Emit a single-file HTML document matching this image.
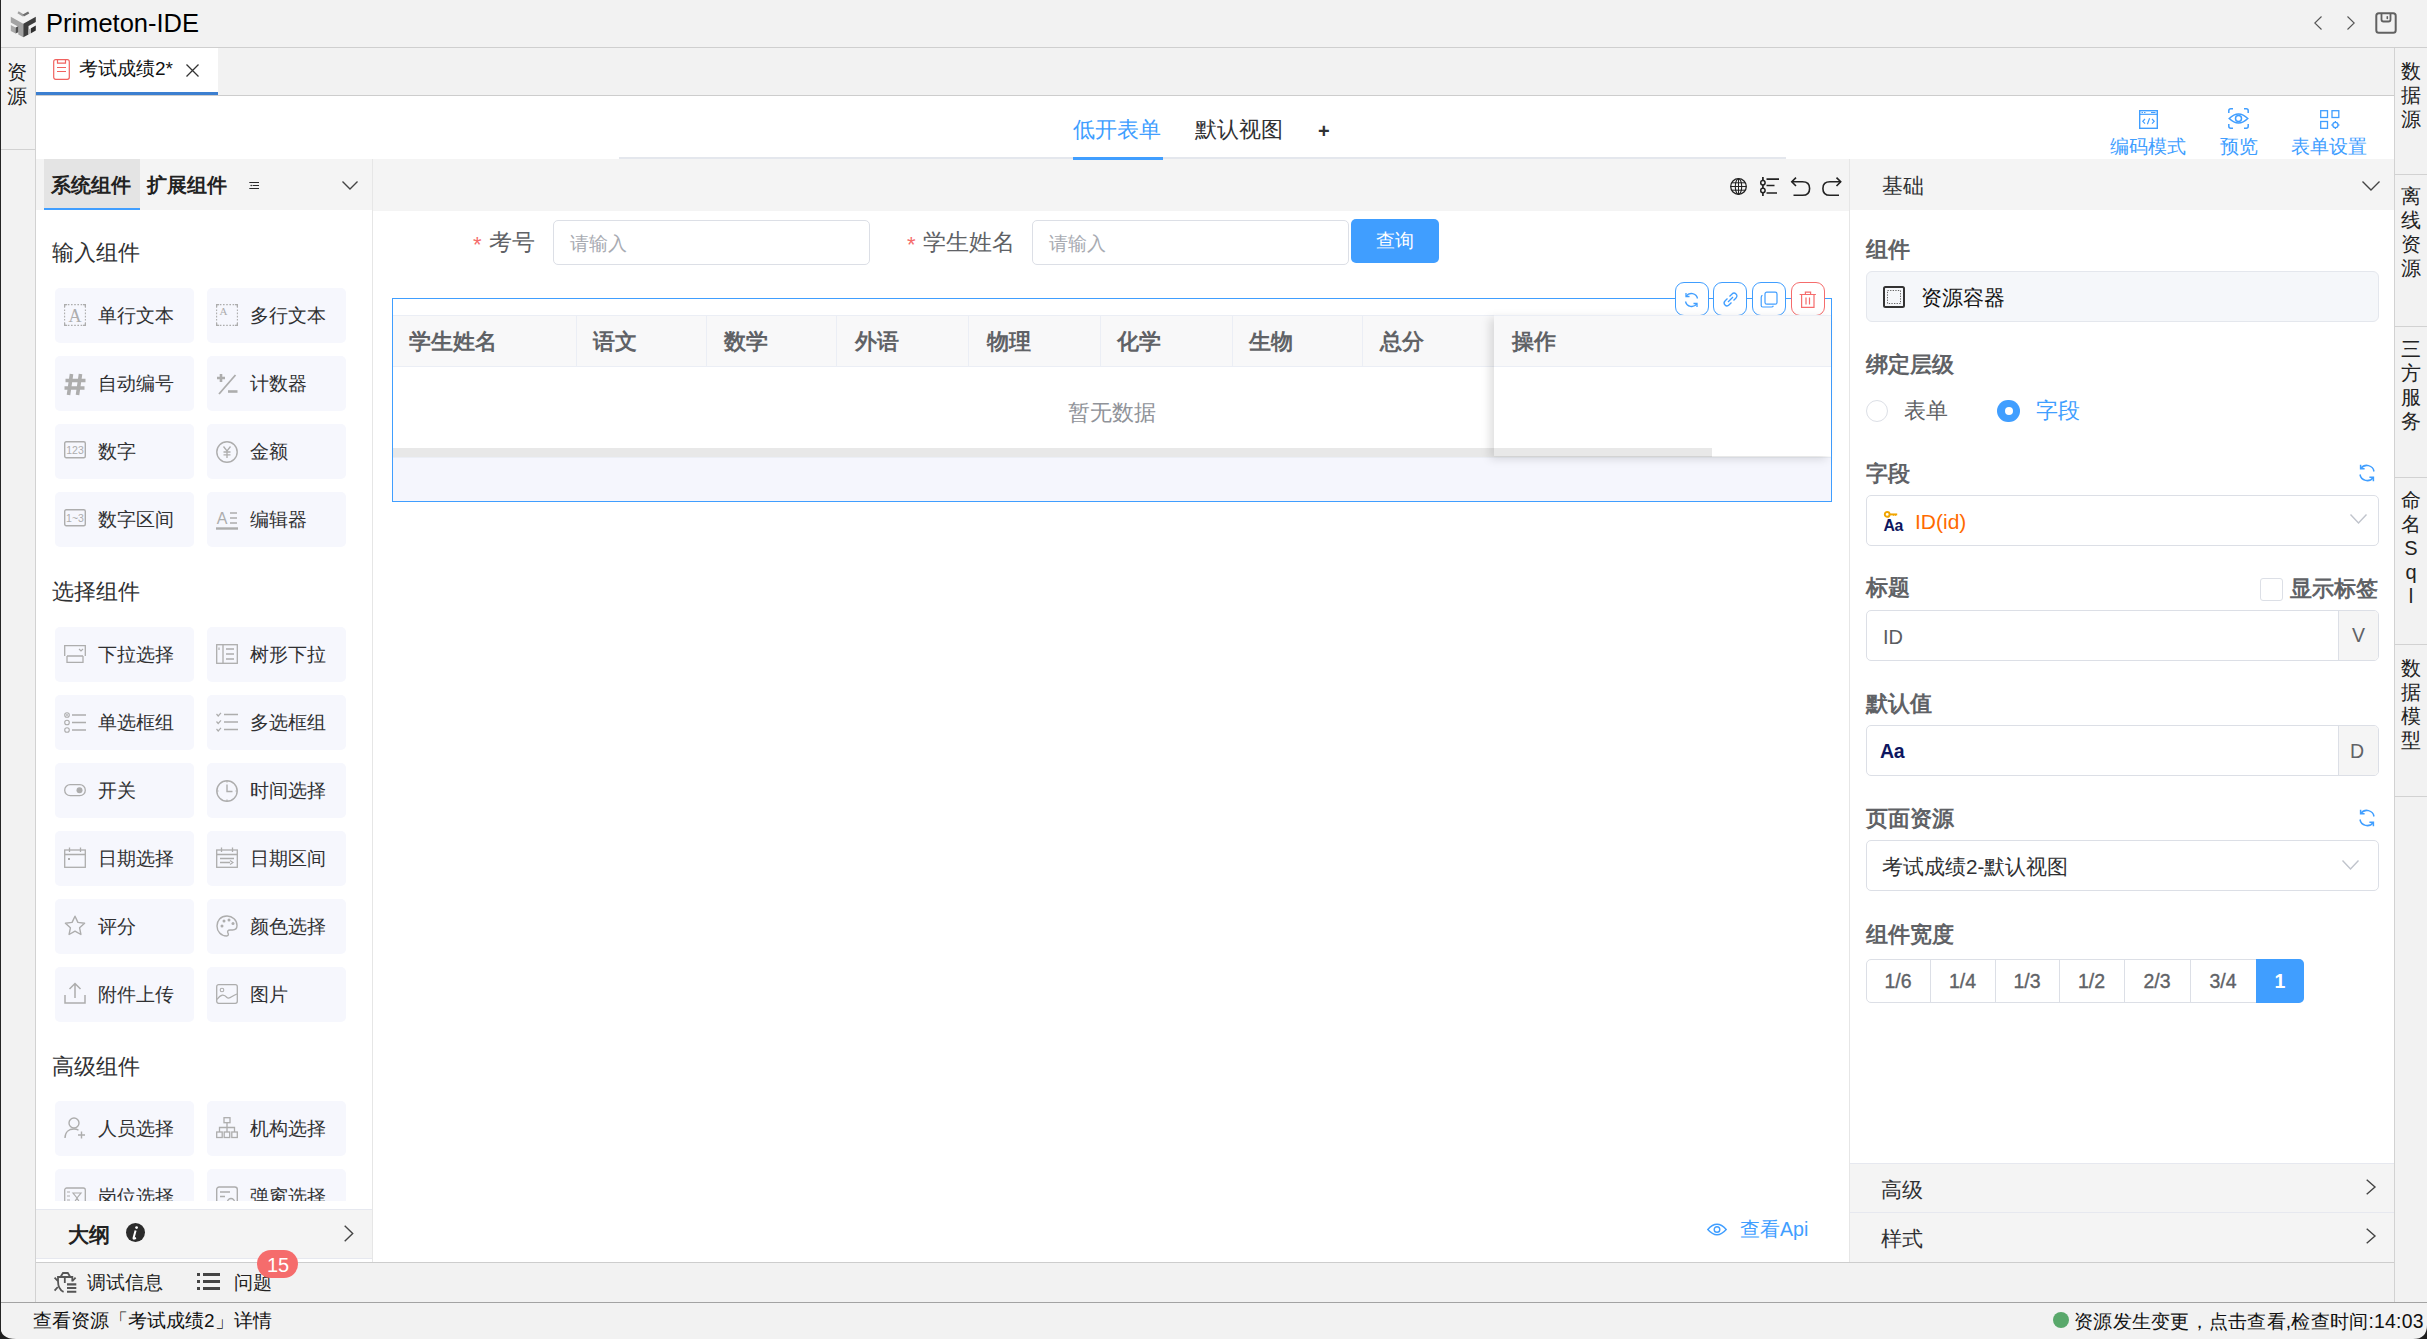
<!DOCTYPE html>
<html><head><meta charset="utf-8">
<style>
*{box-sizing:border-box;margin:0;padding:0}
html,body{width:2427px;height:1339px;overflow:hidden;background:#fff;font-family:"Liberation Sans",sans-serif;color:#303133}
.a{position:absolute}
.t{position:absolute;white-space:nowrap;line-height:1}
svg{position:absolute;overflow:visible}
/* frame */
#titlebar{left:0;top:0;width:2427px;height:48px;background:#f2f2f2;border-bottom:1px solid #cfcfcf}
#lside{left:0;top:48px;width:36px;height:1254px;background:#f2f2f2;border-right:1px solid #d2d2d2}
#rside{left:2394px;top:48px;width:33px;height:1254px;background:#f2f2f2;border-left:1px solid #d2d2d2}
.vtxt{position:absolute;font-size:20px;line-height:24px;width:33px;text-align:center;color:#222;white-space:normal;word-break:break-all}
.sep{position:absolute;height:1px;background:#d2d2d2}
#tabbar{left:36px;top:48px;width:2358px;height:48px;background:#f2f2f2;border-bottom:1px solid #cdcdcd}
#tab1{left:36px;top:48px;width:182px;height:47px;background:#fff;border-bottom:3px solid #3c7fd0}
#dtool{left:36px;top:96px;width:2358px;height:63px;background:#fff}
/* panels */
#lpanel{left:36px;top:159px;width:337px;height:1103px;background:#fff;border-right:1px solid #e6e6e6;overflow:hidden}
#lphead{left:0;top:0;width:336px;height:51px;background:#f4f4f4}
#canvas{left:373px;top:159px;width:1476px;height:1103px;background:#fff}
#ctool{left:0;top:0;width:1476px;height:52px;background:#f4f4f4}
#rpanel{left:1849px;top:159px;width:545px;height:1103px;background:#fff;border-left:1px solid #e6e6e6}
#rphead{left:0;top:0;width:544px;height:51px;background:#f4f4f4}
#bottombar{left:36px;top:1262px;width:2358px;height:40px;background:#f2f2f2;border-top:1px solid #cdcdcd}
#status{left:0;top:1302px;width:2427px;height:37px;background:#f2f2f2;border-top:1px solid #a3a3a3}
.card{position:absolute;width:139px;height:55px;background:#f6f7fd;border-radius:5px}
.card .ct{position:absolute;left:43px;top:18px;font-size:19px;line-height:19px;color:#303133;white-space:nowrap}
.card svg{left:8px;top:16px}
.grp{position:absolute;left:16px;font-size:22px;line-height:22px;color:#303133;white-space:nowrap}
.plabel{position:absolute;left:17px;font-size:22px;line-height:22px;font-weight:bold;color:#606266;white-space:nowrap}
.inp{position:absolute;background:#fff;border:1px solid #dcdfe6;border-radius:5px}
</style></head><body>
<div id="titlebar" class="a"></div>
<div class="a" style="left:0;top:0;width:1px;height:1339px;background:#252525;z-index:50"></div>
<div class="t" style="left:46px;top:11px;font-size:25.5px;color:#000">Primeton-IDE</div>

<div id="lside" class="a"></div>
<div id="rside" class="a"></div>
<div id="tabbar" class="a"></div>
<div id="tab1" class="a"></div>
<div id="dtool" class="a"></div>

<!-- designer toolbar -->
<div class="t" style="left:1073px;top:119px;font-size:22px;color:#409eff">低开表单</div>
<div class="a" style="left:1073px;top:157px;width:90px;height:3px;background:#409eff;z-index:2"></div>
<div class="a" style="left:619px;top:157px;width:1167px;height:2px;background:#e4e7ed"></div>
<div class="t" style="left:1195px;top:119px;font-size:22px;color:#303133">默认视图</div>
<div class="t" style="left:1318px;top:121px;font-size:20px;color:#303133;font-weight:bold">+</div>
<svg style="left:2139px;top:110px" width="19" height="19" viewBox="0 0 19 19"><rect x="0.7" y="0.7" width="17.6" height="17.6" fill="none" stroke="#409eff" stroke-width="1.4"/><path d="M0.7 4.3 H18.3" stroke="#409eff" stroke-width="1.2"/><path d="M2.5 2.5 H4 M5 2.5 H6.5 M12 2.5 H16.5" stroke="#409eff" stroke-width="1"/><path d="M6 9 L3.8 11.3 L6 13.6 M13 9 L15.2 11.3 L13 13.6 M10.6 8.3 L8.4 14.3" fill="none" stroke="#409eff" stroke-width="1.2"/></svg>
<div class="t" style="left:2110px;top:138px;font-size:18.7px;color:#409eff">编码模式</div>
<svg style="left:2228px;top:108px" width="21" height="21" viewBox="0 0 21 21"><path d="M0.8 5 V2.8 Q0.8 0.8 2.8 0.8 H5 M16 0.8 H18.2 Q20.2 0.8 20.2 2.8 V5 M20.2 16 V18.2 Q20.2 20.2 18.2 20.2 H16 M5 20.2 H2.8 Q0.8 20.2 0.8 18.2 V16" fill="none" stroke="#409eff" stroke-width="1.5"/><path d="M1.2 10.5 Q10.5 1.5 19.8 10.5 Q10.5 19.5 1.2 10.5 Z" fill="none" stroke="#409eff" stroke-width="1.5"/><circle cx="10.5" cy="10.5" r="3" fill="none" stroke="#409eff" stroke-width="1.5"/></svg>
<div class="t" style="left:2220px;top:138px;font-size:18.7px;color:#409eff">预览</div>
<svg style="left:2320px;top:110px" width="20" height="20" viewBox="0 0 20 20"><rect x="0.7" y="0.7" width="6.8" height="6.8" fill="none" stroke="#409eff" stroke-width="1.3"/><rect x="12" y="0.7" width="6.8" height="6.8" fill="none" stroke="#409eff" stroke-width="1.3"/><rect x="0.7" y="11.5" width="6.8" height="6.8" fill="none" stroke="#409eff" stroke-width="1.3"/><circle cx="15.4" cy="15" r="2.6" fill="none" stroke="#409eff" stroke-width="1.3"/><path d="M15.4 11 V12.2 M15.4 17.8 V19 M11.4 15 H12.6 M18.2 15 H19.4" stroke="#409eff" stroke-width="1.3"/></svg>
<div class="t" style="left:2291px;top:138px;font-size:18.7px;color:#409eff">表单设置</div>
<div id="lpanel" class="a"><div id="lphead" class="a"></div></div>
<!-- LEFT START -->
<!-- left panel header -->
<div class="a" style="left:44px;top:159px;width:96px;height:52px;background:#e4e4e4"></div>
<div class="a" style="left:44px;top:208px;width:96px;height:3px;background:#409eff"></div>
<div class="t" style="left:51px;top:175px;font-size:20.2px;font-weight:bold;color:#222">系统组件</div>
<div class="t" style="left:147px;top:175px;font-size:20.2px;font-weight:bold;color:#222">扩展组件</div>
<svg style="left:249px;top:181px" width="11" height="9" viewBox="0 0 11 9"><path d="M0.3 1.5 H10 M3.6 4.5 H10 M0.3 7.5 H10" stroke="#2a2a2a" stroke-width="1.2"/><circle cx="2.2" cy="4.5" r="0.8" fill="#2a2a2a"/></svg>
<svg style="left:342px;top:181px" width="16" height="9" viewBox="0 0 16 9"><path d="M0.5 0.5 L8 8 L15.5 0.5" fill="none" stroke="#444" stroke-width="1.4"/></svg>
<div class="a" style="left:36px;top:210px;width:336px;height:991px;overflow:hidden;background:#fff">
<div class="grp" style="top:32px">输入组件</div>
<div class="card" style="left:19px;top:78px"><svg style="left:9px;top:16px" width="22" height="22" viewBox="0 0 22 22"><rect x="0.6" y="0.6" width="20.8" height="20.8" fill="none" stroke="#adadad" stroke-width="1.1" stroke-dasharray="1.6 1.6"/><path d="M0 0 H3 V1.2 H1.2 V3 H0Z M22 0 H19 V1.2 H20.8 V3 H22Z M0 22 H3 V20.8 H1.2 V19 H0Z M22 22 H19 V20.8 H20.8 V19 H22Z" fill="#adadad"/><text x="11" y="18" text-anchor="middle" font-family="Liberation Serif" font-size="18" fill="#adadad">A</text></svg><div class="ct">单行文本</div></div>
<div class="card" style="left:171px;top:78px"><svg style="left:9px;top:16px" width="22" height="22" viewBox="0 0 22 22"><rect x="0.6" y="0.6" width="20.8" height="20.8" fill="none" stroke="#adadad" stroke-width="1.1" stroke-dasharray="1.6 1.6"/><path d="M0 0 H3 V1.2 H1.2 V3 H0Z M22 0 H19 V1.2 H20.8 V3 H22Z M0 22 H3 V20.8 H1.2 V19 H0Z M22 22 H19 V20.8 H20.8 V19 H22Z" fill="#adadad"/><text x="7.5" y="11" text-anchor="middle" font-family="Liberation Serif" font-size="11" fill="#adadad">A</text></svg><div class="ct">多行文本</div></div>
<div class="card" style="left:19px;top:146px"><svg style="left:9px;top:17px" width="22" height="22" viewBox="0 0 22 22"><path d="M7.5 1 L4.5 22 M16.5 1 L13.5 22 M1.5 7.5 H21.5 M0.5 15 H20.5" stroke="#adadad" stroke-width="3.6"/></svg><div class="ct">自动编号</div></div>
<div class="card" style="left:171px;top:146px"><svg style="left:9px;top:17px" width="22" height="22" viewBox="0 0 22 22"><path d="M1 5 H9 M5 1 V9" stroke="#adadad" stroke-width="2.6"/><path d="M19.5 2 L3 21" stroke="#adadad" stroke-width="1.8"/><path d="M12 18.5 H21.5" stroke="#adadad" stroke-width="2.6"/></svg><div class="ct">计数器</div></div>
<div class="card" style="left:19px;top:214px"><svg style="left:9px;top:17px" width="22" height="18" viewBox="0 0 22 18"><rect x="0.7" y="0.7" width="20.6" height="16" rx="1.5" fill="none" stroke="#adadad" stroke-width="1.4"/><text x="11" y="13" text-anchor="middle" font-family="Liberation Sans" font-size="10.5" fill="#adadad">123</text></svg><div class="ct">数字</div></div>
<div class="card" style="left:171px;top:214px"><svg style="left:9px;top:17px" width="22" height="22" viewBox="0 0 22 22"><circle cx="11" cy="11" r="10.2" fill="none" stroke="#adadad" stroke-width="1.4"/><path d="M7.5 5.5 L11 10 L14.5 5.5 M11 10 V17 M7.5 11 H14.5 M7.5 13.8 H14.5" fill="none" stroke="#adadad" stroke-width="1.3"/></svg><div class="ct">金额</div></div>
<div class="card" style="left:19px;top:282px"><svg style="left:9px;top:17px" width="22" height="18" viewBox="0 0 22 18"><rect x="0.7" y="0.7" width="20.6" height="16" rx="1.5" fill="none" stroke="#adadad" stroke-width="1.4"/><text x="11" y="13" text-anchor="middle" font-family="Liberation Sans" font-size="10.5" fill="#adadad">1~3</text></svg><div class="ct">数字区间</div></div>
<div class="card" style="left:171px;top:282px"><svg style="left:9px;top:17px" width="22" height="22" viewBox="0 0 22 22"><text x="6" y="14.5" text-anchor="middle" font-family="Liberation Sans" font-size="16" fill="#adadad">A</text><path d="M14 4 H21 M14 9 H21 M14 14 H21" stroke="#adadad" stroke-width="1.6"/><path d="M0 19.5 H22" stroke="#adadad" stroke-width="2.4"/></svg><div class="ct">编辑器</div></div>
<div class="grp" style="top:371px">选择组件</div>
<div class="card" style="left:19px;top:417px"><svg style="left:9px;top:18px" width="22" height="18" viewBox="0 0 22 18"><path d="M0.7 11 V0.7 H21.3 V11 M3 11 H19 M3 11 V17.3 H19 V11" fill="none" stroke="#adadad" stroke-width="1.3"/><path d="M15 4 L17 6 L19 4" fill="none" stroke="#adadad" stroke-width="1.1"/></svg><div class="ct">下拉选择</div></div>
<div class="card" style="left:171px;top:417px"><svg style="left:9px;top:17px" width="22" height="20" viewBox="0 0 22 20"><rect x="0.7" y="0.7" width="20.6" height="18.6" fill="none" stroke="#adadad" stroke-width="1.3"/><path d="M7 0.7 V19.3 M10 5 H18 M10 10 H18 M10 15 H18" stroke="#adadad" stroke-width="1.3"/><path d="M3 3.5 V6" stroke="#adadad" stroke-width="1.2"/></svg><div class="ct">树形下拉</div></div>
<div class="card" style="left:19px;top:485px"><svg style="left:9px;top:17px" width="22" height="21" viewBox="0 0 22 21"><circle cx="3" cy="3" r="2.3" fill="none" stroke="#adadad" stroke-width="1.1"/><circle cx="3" cy="3" r="0.9" fill="#adadad"/><circle cx="3" cy="10.5" r="2.3" fill="none" stroke="#adadad" stroke-width="1.1"/><circle cx="3" cy="18" r="2.3" fill="none" stroke="#adadad" stroke-width="1.1"/><path d="M8 3 H22 M8 10.5 H22 M8 18 H22" stroke="#adadad" stroke-width="1.4"/></svg><div class="ct">单选框组</div></div>
<div class="card" style="left:171px;top:485px"><svg style="left:9px;top:17px" width="22" height="21" viewBox="0 0 22 21"><path d="M0.5 2 L2.2 4 L5 0.8 M0.5 9.5 L2.2 11.5 L5 8.3 M0.5 17 L2.2 19 L5 15.8" fill="none" stroke="#adadad" stroke-width="1.2"/><path d="M8 2.5 H22 M8 10 H22 M8 17.5 H22" stroke="#adadad" stroke-width="1.4"/></svg><div class="ct">多选框组</div></div>
<div class="card" style="left:19px;top:553px"><svg style="left:9px;top:21px" width="22" height="13" viewBox="0 0 22 13"><rect x="0.7" y="0.7" width="20.6" height="11" rx="5.5" fill="none" stroke="#adadad" stroke-width="1.3"/><circle cx="15.5" cy="6.2" r="3" fill="#adadad"/></svg><div class="ct">开关</div></div>
<div class="card" style="left:171px;top:553px"><svg style="left:9px;top:17px" width="22" height="22" viewBox="0 0 22 22"><circle cx="11" cy="11" r="10.2" fill="none" stroke="#adadad" stroke-width="1.4"/><path d="M11 4.5 V11.5 H16.5" fill="none" stroke="#adadad" stroke-width="1.4"/><path d="M11 0.8 V2.5 M11 19.5 V21.2 M0.8 11 H2.5 M19.5 11 H21.2" stroke="#adadad" stroke-width="1.2"/></svg><div class="ct">时间选择</div></div>
<div class="card" style="left:19px;top:621px"><svg style="left:9px;top:16px" width="22" height="21" viewBox="0 0 22 21"><rect x="0.7" y="3" width="20.6" height="17.3" fill="none" stroke="#adadad" stroke-width="1.3"/><path d="M0.7 7.5 H21.3 M5.5 0.5 V5 M16.5 0.5 V5" stroke="#adadad" stroke-width="1.3"/><rect x="4" y="11" width="2" height="2" fill="#adadad"/></svg><div class="ct">日期选择</div></div>
<div class="card" style="left:171px;top:621px"><svg style="left:9px;top:16px" width="22" height="21" viewBox="0 0 22 21"><rect x="0.7" y="3" width="20.6" height="17.3" fill="none" stroke="#adadad" stroke-width="1.3"/><path d="M0.7 7.5 H21.3 M5.5 0.5 V5 M16.5 0.5 V5 M4 11.5 H18 M4 15.5 H14" stroke="#adadad" stroke-width="1.3"/><path d="M14 13.5 L17 15.5 L14 17.5" fill="none" stroke="#adadad" stroke-width="1.1"/></svg><div class="ct">日期区间</div></div>
<div class="card" style="left:19px;top:689px"><svg style="left:9px;top:16px" width="22" height="22" viewBox="0 0 22 22"><path d="M11 1.2 L13.9 7.4 L20.6 8.2 L15.6 12.8 L16.9 19.5 L11 16.2 L5.1 19.5 L6.4 12.8 L1.4 8.2 L8.1 7.4 Z" fill="none" stroke="#adadad" stroke-width="1.4" stroke-linejoin="round"/></svg><div class="ct">评分</div></div>
<div class="card" style="left:171px;top:689px"><svg style="left:9px;top:16px" width="22" height="22" viewBox="0 0 22 22"><path d="M11 1 C4.5 1 1 5.5 1 11 C1 16.5 5 21 10.5 21 C12.5 21 12.8 19.5 12 18.2 C11 16.5 12 15 14 15 H16.5 C19.5 15 21 13 21 10.5 C21 5 16.5 1 11 1 Z" fill="none" stroke="#adadad" stroke-width="1.4"/><circle cx="6" cy="11" r="1.5" fill="#adadad"/><circle cx="8" cy="6" r="1.5" fill="#adadad"/><circle cx="13" cy="5" r="1.5" fill="#adadad"/><circle cx="17" cy="8.5" r="1.5" fill="#adadad"/></svg><div class="ct">颜色选择</div></div>
<div class="card" style="left:19px;top:757px"><svg style="left:9px;top:15px" width="22" height="22" viewBox="0 0 22 22"><path d="M1 13 V21 H21 V13" fill="none" stroke="#adadad" stroke-width="1.5"/><path d="M11 16 V1.5 M5.5 7 L11 1.5 L16.5 7" fill="none" stroke="#adadad" stroke-width="1.5"/></svg><div class="ct">附件上传</div></div>
<div class="card" style="left:171px;top:757px"><svg style="left:9px;top:17px" width="22" height="20" viewBox="0 0 22 20"><rect x="0.7" y="0.7" width="20.6" height="18.6" rx="2" fill="none" stroke="#adadad" stroke-width="1.3"/><circle cx="6" cy="6" r="1.8" fill="none" stroke="#adadad" stroke-width="1.1"/><path d="M1 15.5 C5 10 8 10 11 13.5 C13.5 16 16 11.5 21 10" fill="none" stroke="#adadad" stroke-width="1.2"/></svg><div class="ct">图片</div></div>
<div class="grp" style="top:846px">高级组件</div>
<div class="card" style="left:19px;top:891px"><svg style="left:9px;top:16px" width="22" height="22" viewBox="0 0 22 22"><circle cx="10" cy="6" r="5" fill="none" stroke="#adadad" stroke-width="1.4"/><path d="M1 21 C1 15 5 12 10 12 C12 12 13.5 12.5 14.5 13.3" fill="none" stroke="#adadad" stroke-width="1.4"/><path d="M14 18 H21 M17.5 14.5 V21.5" stroke="#adadad" stroke-width="1.4"/></svg><div class="ct">人员选择</div></div>
<div class="card" style="left:171px;top:891px"><svg style="left:9px;top:16px" width="22" height="22" viewBox="0 0 22 22"><rect x="8" y="0.7" width="6" height="5" fill="none" stroke="#adadad" stroke-width="1.3"/><rect x="0.7" y="15" width="5.5" height="5.5" fill="none" stroke="#adadad" stroke-width="1.3"/><rect x="8.2" y="15" width="5.5" height="5.5" fill="none" stroke="#adadad" stroke-width="1.3"/><rect x="15.8" y="15" width="5.5" height="5.5" fill="none" stroke="#adadad" stroke-width="1.3"/><path d="M11 5.7 V15 M3.5 15 V10.5 H18.5 V15" fill="none" stroke="#adadad" stroke-width="1.3"/></svg><div class="ct">机构选择</div></div>
<div class="card" style="left:19px;top:959px"><svg style="left:9px;top:17px" width="22" height="22" viewBox="0 0 22 22"><rect x="0.7" y="2" width="20.6" height="19" rx="2" fill="none" stroke="#adadad" stroke-width="1.3"/><path d="M3 6 H6 M3 10 H6 M3 14 H6 M3 18 H6" stroke="#adadad" stroke-width="1.2"/><path d="M9 7 L17 7 L13 12 L17 19 L9 19 L13 12 Z" fill="none" stroke="#adadad" stroke-width="1.2"/></svg><div class="ct">岗位选择</div></div>
<div class="card" style="left:171px;top:959px"><svg style="left:9px;top:17px" width="22" height="22" viewBox="0 0 22 22"><rect x="0.7" y="1" width="20.6" height="19" rx="2.5" fill="none" stroke="#adadad" stroke-width="1.4"/><path d="M4 6 H14 M4 10.5 H9" stroke="#adadad" stroke-width="1.3"/><circle cx="15" cy="16" r="3.5" fill="none" stroke="#adadad" stroke-width="1.3"/></svg><div class="ct">弹窗选择</div></div>
</div>

<!-- outline bar -->
<div class="a" style="left:36px;top:1209px;width:336px;height:50px;background:#f4f4f4;border-top:1px solid #e6e8ef;border-bottom:1px solid #e6e8ef"></div>
<div class="t" style="left:68px;top:1224px;font-size:21px;font-weight:bold;color:#222">大纲</div>
<svg style="left:126px;top:1223px" width="19" height="19" viewBox="0 0 19 19"><circle cx="9.5" cy="9.5" r="9.5" fill="#2b2b2b"/><circle cx="10.6" cy="4.6" r="1.4" fill="#fff"/><path d="M9.6 7.6 L7.6 14.8 Q7.3 15.8 8.3 15.6 L10 15" fill="none" stroke="#fff" stroke-width="2"/></svg>
<svg style="left:344px;top:1225px" width="10" height="17" viewBox="0 0 10 17"><path d="M0.7 0.7 L8.7 8.5 L0.7 16.3" fill="none" stroke="#444" stroke-width="1.4"/></svg>
<!-- LEFT END -->
<div id="canvas" class="a"><div id="ctool" class="a"></div></div>

<!-- canvas toolbar icons -->
<svg style="left:1730px;top:178px" width="17" height="17" viewBox="0 0 17 17"><circle cx="8.5" cy="8.5" r="7.8" fill="none" stroke="#222" stroke-width="1.3"/><ellipse cx="8.5" cy="8.5" rx="3.2" ry="7.8" fill="none" stroke="#222" stroke-width="1.1"/><path d="M0.7 8.5 H16.3 M2 4.8 H15 M2 12.2 H15 M8.5 0.7 V16.3" stroke="#222" stroke-width="1"/></svg>
<svg style="left:1760px;top:177px" width="20" height="20" viewBox="0 0 20 20"><path d="M2.9 0 V19" stroke="#222" stroke-width="1.7"/><circle cx="2.9" cy="5.8" r="2.2" fill="#f4f4f4" stroke="#222" stroke-width="1.5"/><circle cx="2.9" cy="13.5" r="2.2" fill="#f4f4f4" stroke="#222" stroke-width="1.5"/><path d="M6.5 2.2 H19 M6.5 8.5 H14.5 M6.5 16 H17" stroke="#222" stroke-width="1.7"/></svg>
<svg style="left:1791px;top:177px" width="20" height="20" viewBox="0 0 20 20"><path d="M5 0.6 L0.8 4.8 L5 9" fill="none" stroke="#222" stroke-width="1.6"/><path d="M0.8 4.8 H11.5 Q18.6 4.8 18.6 11.4 Q18.6 18.3 11.5 18.3 H2.5" fill="none" stroke="#222" stroke-width="1.6"/></svg>
<svg style="left:1822px;top:177px" width="20" height="20" viewBox="0 0 20 20"><path d="M14.5 0.6 L18.7 4.8 L14.5 9" fill="none" stroke="#222" stroke-width="1.6"/><path d="M18.7 4.8 H8 Q0.9 4.8 0.9 11.4 Q0.9 18.3 8 18.3 H17" fill="none" stroke="#222" stroke-width="1.6"/></svg>

<!-- query form -->
<div class="t" style="left:473px;top:234px;font-size:22px;color:#f56c6c">*</div>
<div class="t" style="left:489px;top:232px;font-size:22.5px;color:#606266">考号</div>
<div class="inp" style="left:553px;top:220px;width:317px;height:45px"></div>
<div class="t" style="left:570px;top:234px;font-size:19px;color:#a8abb2">请输入</div>
<div class="t" style="left:907px;top:234px;font-size:22px;color:#f56c6c">*</div>
<div class="t" style="left:923px;top:232px;font-size:22.5px;color:#606266">学生姓名</div>
<div class="inp" style="left:1032px;top:220px;width:317px;height:45px"></div>
<div class="t" style="left:1049px;top:234px;font-size:19px;color:#a8abb2">请输入</div>
<div class="a" style="left:1351px;top:219px;width:88px;height:44px;background:#409eff;border-radius:5px"></div>
<div class="t" style="left:1376px;top:231px;font-size:19px;color:#fff">查询</div>

<!-- table container -->
<div class="a" style="left:1675px;top:282px;width:34px;height:34px;border:1px solid #409eff;border-radius:9px;background:#fff"></div>
<div class="a" style="left:1713px;top:282px;width:34px;height:34px;border:1px solid #409eff;border-radius:9px;background:#fff"></div>
<div class="a" style="left:1752px;top:282px;width:34px;height:34px;border:1px solid #409eff;border-radius:9px;background:#fff"></div>
<div class="a" style="left:1791px;top:282px;width:34px;height:34px;border:1px solid #f56c6c;border-radius:9px;background:#fff"></div>
<div class="a" style="left:392px;top:298px;width:1283px;height:1px;background:#409eff"></div>
<div class="a" style="left:1708px;top:298px;width:6px;height:1px;background:#409eff"></div>
<div class="a" style="left:1746px;top:298px;width:7px;height:1px;background:#409eff"></div>
<div class="a" style="left:1786px;top:298px;width:5px;height:1px;background:#409eff"></div>
<div class="a" style="left:1825px;top:298px;width:7px;height:1px;background:#409eff"></div>
<div class="a" style="left:392px;top:298px;width:1px;height:204px;background:#409eff"></div>
<div class="a" style="left:1831px;top:298px;width:1px;height:204px;background:#409eff"></div>
<div class="a" style="left:392px;top:501px;width:1440px;height:1px;background:#409eff"></div>
<svg style="left:1684px;top:292px" width="15" height="16" viewBox="0 0 15 16"><path d="M13.5 6.5 A6.3 6.3 0 0 0 2.2 4.2 M1.5 9.5 A6.3 6.3 0 0 0 12.8 11.8" fill="none" stroke="#409eff" stroke-width="1.3"/><path d="M2 1 V4.5 H5.5 M13 15 V11.5 H9.5" fill="none" stroke="#409eff" stroke-width="1.3"/></svg>
<svg style="left:1723px;top:292px" width="15" height="15" viewBox="0 0 15 15"><path d="M6.5 4.5 L8.8 2.2 Q11 0 13 2 Q15 4 12.8 6.2 L10.5 8.5 M8.5 10.5 L6.2 12.8 Q4 15 2 13 Q0 11 2.2 8.8 L4.5 6.5 M5 10 L10 5" fill="none" stroke="#409eff" stroke-width="1.3"/></svg>
<svg style="left:1760px;top:291px" width="19" height="18" viewBox="0 0 19 18"><rect x="5" y="1.2" width="12" height="12" rx="1.8" fill="none" stroke="#409eff" stroke-width="1.2"/><path d="M2.4 4.3 Q1.2 5 1.2 6.5 V14.5 Q1.2 16 2.7 16 H11.5 Q12.8 16 13.4 14.8" fill="none" stroke="#409eff" stroke-width="1.2"/></svg>
<svg style="left:1799px;top:291px" width="18" height="18" viewBox="0 0 18 18"><path d="M0.6 3.5 H16.9 M6.4 3.5 V1.2 H11.6 V3.5 M2.6 3.5 V16.3 H15 V3.5 M7 6.5 V13.5 M10.5 6.5 V13.5" fill="none" stroke="#f56c6c" stroke-width="1.2"/></svg>

<!-- table -->
<div class="a" style="left:393px;top:315px;width:1438px;height:52px;background:#f8f8f9;border-top:1px solid #ebeef5;border-bottom:1px solid #ebeef5"></div>
<div class="t" style="left:409px;top:331px;font-size:22px;font-weight:bold;color:#606266">学生姓名</div>
<div class="a" style="left:576px;top:316px;width:1px;height:50px;background:#ebeef5"></div>
<div class="t" style="left:593px;top:331px;font-size:22px;font-weight:bold;color:#606266">语文</div>
<div class="a" style="left:706px;top:316px;width:1px;height:50px;background:#ebeef5"></div>
<div class="t" style="left:724px;top:331px;font-size:22px;font-weight:bold;color:#606266">数学</div>
<div class="a" style="left:836px;top:316px;width:1px;height:50px;background:#ebeef5"></div>
<div class="t" style="left:855px;top:331px;font-size:22px;font-weight:bold;color:#606266">外语</div>
<div class="a" style="left:968px;top:316px;width:1px;height:50px;background:#ebeef5"></div>
<div class="t" style="left:987px;top:331px;font-size:22px;font-weight:bold;color:#606266">物理</div>
<div class="a" style="left:1100px;top:316px;width:1px;height:50px;background:#ebeef5"></div>
<div class="t" style="left:1117px;top:331px;font-size:22px;font-weight:bold;color:#606266">化学</div>
<div class="a" style="left:1232px;top:316px;width:1px;height:50px;background:#ebeef5"></div>
<div class="t" style="left:1249px;top:331px;font-size:22px;font-weight:bold;color:#606266">生物</div>
<div class="a" style="left:1362px;top:316px;width:1px;height:50px;background:#ebeef5"></div>
<div class="t" style="left:1380px;top:331px;font-size:22px;font-weight:bold;color:#606266">总分</div>
<div class="a" style="left:1494px;top:316px;width:1px;height:50px;background:#ebeef5"></div>
<div class="t" style="left:1068px;top:402px;font-size:22px;color:#909399">暂无数据</div>
<div class="a" style="left:393px;top:448px;width:1319px;height:9px;background:#e8e8e8"></div>
<div class="a" style="left:393px;top:457px;width:1438px;height:1px;background:#ebeef5"></div>
<div class="a" style="left:393px;top:458px;width:1438px;height:43px;background:#f5f6fd"></div>
<div class="a" style="left:1494px;top:315px;width:337px;height:141px;background:#fff;box-shadow:-4px 3px 9px rgba(0,0,0,0.13);border-top:1px solid #ebeef5"></div>
<div class="a" style="left:1494px;top:316px;width:337px;height:51px;background:#f8f8f9;border-bottom:1px solid #ebeef5"></div>
<div class="t" style="left:1512px;top:331px;font-size:22px;font-weight:bold;color:#606266">操作</div>
<div class="a" style="left:1494px;top:448px;width:218px;height:8px;background:#e8e8e8"></div>

<!-- api link -->
<svg style="left:1707px;top:1222px" width="20" height="15" viewBox="0 0 20 15"><path d="M0.8 7.5 Q10 -3 19.2 7.5 Q10 18 0.8 7.5 Z" fill="none" stroke="#409eff" stroke-width="1.4"/><circle cx="10" cy="7.5" r="2.8" fill="none" stroke="#409eff" stroke-width="1.4"/></svg>
<div class="t" style="left:1740px;top:1220px;font-size:19.6px;color:#409eff">查看Api</div>
<div id="rpanel" class="a"><div id="rphead" class="a"></div></div>

<!-- logo -->
<svg style="left:0;top:0" width="48" height="48" viewBox="0 0 48 48">
 <path d="M18 12.3 L23.3 15.6" fill="none" stroke="#a0a0a0" stroke-width="2.3"/>
 <path d="M23.3 15.6 L28.7 12.4" fill="none" stroke="#6e6e6e" stroke-width="2.3"/>
 <path d="M10.8 16.8 L23.3 23.7 L23.3 37.3 L18.3 34.4 L18.3 26.8 L10.8 22.5 Z" fill="#a3a3a3"/>
 <path d="M23.3 23.7 L35.8 16.8 L35.8 22 L28.5 26 L28.5 34.5 L23.3 37.3 Z" fill="#3d3d3d"/>
 <path d="M10.8 25 L15.6 27.6 L15.6 33.6 L10.8 31 Z" fill="#a8a8a8"/>
 <path d="M15.6 27.6 L18.3 26.2 L18.3 32.2 L15.6 33.6 Z" fill="#505050"/>
 <path d="M28.5 29.6 L31 28.3 L31 33.2 L28.5 34.5 Z" fill="#bdbdbd"/>
 <path d="M31 28.3 L35.8 25.4 L35.8 30.6 L31 33.2 Z" fill="#2e2e2e"/>
</svg>
<!-- window nav -->
<svg style="left:2314px;top:16px" width="8" height="14" viewBox="0 0 8 14"><path d="M7.5 0.5 L0.8 7 L7.5 13.5" fill="none" stroke="#555" stroke-width="1.1"/></svg>
<svg style="left:2347px;top:16px" width="8" height="14" viewBox="0 0 8 14"><path d="M0.5 0.5 L7.2 7 L0.5 13.5" fill="none" stroke="#555" stroke-width="1.1"/></svg>
<svg style="left:2375px;top:12px" width="22" height="22" viewBox="0 0 22 22"><rect x="1.3" y="1.3" width="19.4" height="19.4" rx="2.5" fill="none" stroke="#616161" stroke-width="2"/><path d="M6.5 1.3 V7.5 Q6.5 9.5 8.5 9.5 H13.5 Q15.5 9.5 15.5 7.5 V1.3" fill="none" stroke="#616161" stroke-width="1.8"/><rect x="11.5" y="4" width="1.6" height="3.2" rx="0.8" fill="#616161"/></svg>

<!-- left sidebar -->
<div class="vtxt" style="left:1px;top:60px;width:31px">资<br>源</div>
<div class="sep" style="left:1px;top:149px;width:34px"></div>
<!-- right sidebar -->
<div class="vtxt" style="left:2395px;top:59px;width:32px">数<br>据<br>源</div>
<div class="sep" style="left:2395px;top:174px;width:32px"></div>
<div class="vtxt" style="left:2395px;top:184px;width:32px">离<br>线<br>资<br>源</div>
<div class="sep" style="left:2395px;top:326px;width:32px"></div>
<div class="vtxt" style="left:2395px;top:337px;width:32px">三<br>方<br>服<br>务</div>
<div class="sep" style="left:2395px;top:477px;width:32px"></div>
<div class="vtxt" style="left:2395px;top:488px;width:32px">命<br>名<br>S<br>q<br>l</div>
<div class="sep" style="left:2395px;top:644px;width:32px"></div>
<div class="vtxt" style="left:2395px;top:656px;width:32px">数<br>据<br>模<br>型</div>
<div class="sep" style="left:2395px;top:796px;width:32px"></div>

<!-- file tab -->
<svg style="left:53px;top:59px" width="17" height="21" viewBox="0 0 17 21"><rect x="0.7" y="0.7" width="15.6" height="19.6" rx="2" fill="none" stroke="#f0625f" stroke-width="1.2"/><path d="M4.5 0.7 V4.2 H12.5 V0.7" fill="none" stroke="#f0625f" stroke-width="1.2"/><path d="M4 8.5 H13 M4 12.5 H13" stroke="#f0625f" stroke-width="1.2"/></svg>
<div class="t" style="left:79px;top:59px;font-size:19px;color:#111">考试成绩2*</div>
<svg style="left:186px;top:64px" width="13" height="13" viewBox="0 0 13 13"><path d="M0.5 0.5 L12.5 12.5 M12.5 0.5 L0.5 12.5" stroke="#333" stroke-width="1.3"/></svg>

<!-- right panel -->
<div class="t" style="left:1882px;top:176px;font-size:20.5px;color:#303133">基础</div>
<svg style="left:2362px;top:181px" width="18" height="10" viewBox="0 0 18 10"><path d="M0.5 0.5 L9.0 9 L17.5 0.5" fill="none" stroke="#444" stroke-width="1.4"/></svg>
<div class="plabel" style="left:1866px;top:239px">组件</div>
<div class="a" style="left:1866px;top:271px;width:513px;height:51px;background:#f5f7fa;border:1px solid #e4e7ed;border-radius:6px"></div>
<svg style="left:1883px;top:286px" width="22" height="22" viewBox="0 0 22 22"><rect x="1" y="1" width="20" height="20" rx="1.5" fill="none" stroke="#333" stroke-width="2"/><rect x="4.5" y="4.5" width="13" height="13" fill="none" stroke="#666" stroke-width="1" stroke-dasharray="1.3 1.3"/></svg>
<div class="t" style="left:1921px;top:287px;font-size:21px;color:#111">资源容器</div>
<div class="plabel" style="left:1866px;top:354px">绑定层级</div>
<div class="a" style="left:1866px;top:400px;width:22px;height:22px;border-radius:11px;border:1px solid #dcdfe6;background:#fff"></div>
<div class="t" style="left:1904px;top:400px;font-size:22px;color:#606266">表单</div>
<div class="a" style="left:1997px;top:400px;width:23px;height:22px;border-radius:11px;background:#409eff"></div>
<div class="a" style="left:2004.5px;top:407px;width:8px;height:8px;border-radius:4px;background:#fff"></div>
<div class="t" style="left:2036px;top:400px;font-size:22px;color:#409eff">字段</div>

<div class="plabel" style="left:1866px;top:463px">字段</div>
<svg style="left:2358px;top:464px" width="18" height="18" viewBox="0 0 18 18"><path d="M16 7.5 A7.3 7.3 0 0 0 3 4.3 M2 10.5 A7.3 7.3 0 0 0 15 13.7" fill="none" stroke="#409eff" stroke-width="1.5"/><path d="M2.6 0.8 V4.8 H6.6 M15.4 17.2 V13.2 H11.4" fill="none" stroke="#409eff" stroke-width="1.5"/></svg>
<div class="inp" style="left:1866px;top:495px;width:513px;height:51px"></div>
<svg style="left:1884px;top:511px" width="14" height="8" viewBox="0 0 14 8"><circle cx="3.2" cy="3.4" r="2.4" fill="none" stroke="#f0a500" stroke-width="1.9"/><path d="M5.5 3.4 H13.2" stroke="#f0a500" stroke-width="1.9"/><path d="M9.5 3.4 V4.8 M11.5 3.4 V4.8" stroke="#f0a500" stroke-width="1.3"/></svg>
<div class="t" style="left:1883.5px;top:518px;font-size:15.8px;font-weight:bold;color:#0d1660;letter-spacing:-0.3px">Aa</div>
<div class="t" style="left:1915px;top:511px;font-size:21px;color:#ff6a00">ID(id)</div>
<svg style="left:2350px;top:514px" width="17" height="10" viewBox="0 0 17 10"><path d="M0.5 0.5 L8.5 9 L16.5 0.5" fill="none" stroke="#c0c4cc" stroke-width="1.4"/></svg>

<div class="plabel" style="left:1866px;top:577px">标题</div>
<div class="a" style="left:2260px;top:578px;width:23px;height:23px;border-radius:3px;border:1px solid #dcdfe6;background:#fff"></div>
<div class="t" style="left:2290px;top:578px;font-size:21.7px;font-weight:bold;color:#606266">显示标签</div>
<div class="inp" style="left:1866px;top:610px;width:513px;height:51px;overflow:hidden"><div class="a" style="left:471px;top:0;width:41px;height:49px;background:#f5f5f5;border-left:1px solid #dcdfe6"></div></div>
<div class="t" style="left:1883px;top:627px;font-size:20px;color:#5a5c60">ID</div>
<div class="t" style="left:2352px;top:626px;font-size:19.5px;color:#606266">V</div>

<div class="plabel" style="left:1866px;top:693px">默认值</div>
<div class="inp" style="left:1866px;top:725px;width:513px;height:51px;overflow:hidden"><div class="a" style="left:471px;top:0;width:41px;height:49px;background:#f5f5f5;border-left:1px solid #dcdfe6"></div></div>
<div class="t" style="left:1880px;top:742px;font-size:19.5px;font-weight:bold;color:#0d1660;letter-spacing:-0.4px">Aa</div>
<div class="t" style="left:2350px;top:742px;font-size:19.5px;color:#606266">D</div>

<div class="plabel" style="left:1866px;top:808px">页面资源</div>
<svg style="left:2358px;top:809px" width="18" height="18" viewBox="0 0 18 18"><path d="M16 7.5 A7.3 7.3 0 0 0 3 4.3 M2 10.5 A7.3 7.3 0 0 0 15 13.7" fill="none" stroke="#409eff" stroke-width="1.5"/><path d="M2.6 0.8 V4.8 H6.6 M15.4 17.2 V13.2 H11.4" fill="none" stroke="#409eff" stroke-width="1.5"/></svg>
<div class="inp" style="left:1866px;top:840px;width:513px;height:51px"></div>
<div class="t" style="left:1882px;top:857px;font-size:20.7px;color:#303133">考试成绩2-默认视图</div>
<svg style="left:2342px;top:860px" width="17" height="10" viewBox="0 0 17 10"><path d="M0.5 0.5 L8.5 9 L16.5 0.5" fill="none" stroke="#c0c4cc" stroke-width="1.4"/></svg>

<div class="plabel" style="left:1866px;top:924px">组件宽度</div>
<div class="inp" style="left:1866px;top:959px;width:438px;height:44px;overflow:hidden"></div>
<div class="t" style="left:1866px;top:972px;width:64px;text-align:center;font-size:19.5px;color:#606266;-webkit-text-stroke:0.35px #606266">1/6</div>
<div class="t" style="left:1930px;top:972px;width:65px;text-align:center;font-size:19.5px;color:#606266;-webkit-text-stroke:0.35px #606266">1/4</div>
<div class="a" style="left:1930px;top:960px;width:1px;height:43px;background:#dcdfe6"></div>
<div class="t" style="left:1995px;top:972px;width:64px;text-align:center;font-size:19.5px;color:#606266;-webkit-text-stroke:0.35px #606266">1/3</div>
<div class="a" style="left:1995px;top:960px;width:1px;height:43px;background:#dcdfe6"></div>
<div class="t" style="left:2059px;top:972px;width:65px;text-align:center;font-size:19.5px;color:#606266;-webkit-text-stroke:0.35px #606266">1/2</div>
<div class="a" style="left:2059px;top:960px;width:1px;height:43px;background:#dcdfe6"></div>
<div class="t" style="left:2124px;top:972px;width:66px;text-align:center;font-size:19.5px;color:#606266;-webkit-text-stroke:0.35px #606266">2/3</div>
<div class="a" style="left:2124px;top:960px;width:1px;height:43px;background:#dcdfe6"></div>
<div class="t" style="left:2190px;top:972px;width:66px;text-align:center;font-size:19.5px;color:#606266;-webkit-text-stroke:0.35px #606266">3/4</div>
<div class="a" style="left:2190px;top:960px;width:1px;height:43px;background:#dcdfe6"></div>
<div class="a" style="left:2256px;top:959px;width:48px;height:44px;background:#409eff;border-radius:0 5px 5px 0"></div>
<div class="t" style="left:2256px;top:972px;width:48px;text-align:center;font-size:19.5px;font-weight:bold;color:#fff">1</div>

<div class="a" style="left:1850px;top:1163px;width:544px;height:99px;background:#f4f4f4"></div>
<div class="a" style="left:1850px;top:1163px;width:544px;height:1px;background:#e6e8ef"></div>
<div class="a" style="left:1850px;top:1212px;width:544px;height:1px;background:#e6e8ef"></div>
<div class="t" style="left:1881px;top:1180px;font-size:20.5px;color:#303133">高级</div>
<div class="t" style="left:1881px;top:1229px;font-size:20.5px;color:#303133">样式</div>
<svg style="left:2366px;top:1179px" width="10" height="16" viewBox="0 0 10 16"><path d="M0.7 0.7 L9 8 L0.7 15.3" fill="none" stroke="#444" stroke-width="1.4"/></svg>
<svg style="left:2366px;top:1228px" width="10" height="16" viewBox="0 0 10 16"><path d="M0.7 0.7 L9 8 L0.7 15.3" fill="none" stroke="#444" stroke-width="1.4"/></svg>
<div id="bottombar" class="a"></div>
<div id="status" class="a"></div>

<!-- bottom bar content -->
<svg style="left:50px;top:1266px" width="32" height="32" viewBox="0 0 32 32"><path d="M10.8 10.5 L13 7 H17.8 L20 10.5" fill="none" stroke="#555" stroke-width="1.8"/><path d="M22.3 15.5 V11 H8 V15 Q8 23.5 13.6 25.8" fill="none" stroke="#555" stroke-width="1.8"/><path d="M14.8 11 V17" stroke="#555" stroke-width="1.8"/><path d="M4.6 11.6 L7.8 15 M4.6 24.6 L7.8 21 M25.6 11.6 L22.4 15" fill="none" stroke="#555" stroke-width="1.8"/><path d="M17 18.4 H26.3 M17 22 H26.3 M17 25.7 H26.3" stroke="#555" stroke-width="2.1"/></svg>
<div class="t" style="left:87px;top:1274px;font-size:18.7px;color:#222">调试信息</div>
<svg style="left:197px;top:1273px" width="23" height="17" viewBox="0 0 23 17"><path d="M0 1.5 H3 M0 8.5 H3 M0 15.5 H3" stroke="#444" stroke-width="3"/><path d="M6 1.5 H23 M6 8.5 H23 M6 15.5 H23" stroke="#444" stroke-width="3"/></svg>
<div class="t" style="left:234px;top:1274px;font-size:18.7px;color:#222">问题</div>
<div class="a" style="left:257px;top:1250px;width:41px;height:28px;border-radius:14px;background:#f56c6c;z-index:5"></div>
<div class="t" style="left:257.5px;top:1255px;width:41px;text-align:center;font-size:20px;color:#fff;z-index:6">15</div>
<!-- status -->
<div class="t" style="left:33px;top:1312px;font-size:18.9px;color:#111">查看资源「考试成绩2」详情</div>
<div class="a" style="left:2053px;top:1312px;width:16px;height:16px;border-radius:8px;background:#59a86b"></div>
<div class="t" style="left:2074px;top:1312px;font-size:19.4px;letter-spacing:0.25px;color:#111">资源发生变更，点击查看,检查时间:14:03</div>
<!-- window corners -->
<svg style="left:0;top:1325px;z-index:60" width="16" height="14" viewBox="0 0 16 14"><path d="M0 0 Q0 14 16 14 L0 14 Z" fill="#1e1e1e"/></svg>
<svg style="left:2413px;top:1325px;z-index:60" width="14" height="14" viewBox="0 0 14 14"><path d="M14 0 Q14 14 0 14 L14 14 Z" fill="#1e1e1e"/></svg>
</body></html>
